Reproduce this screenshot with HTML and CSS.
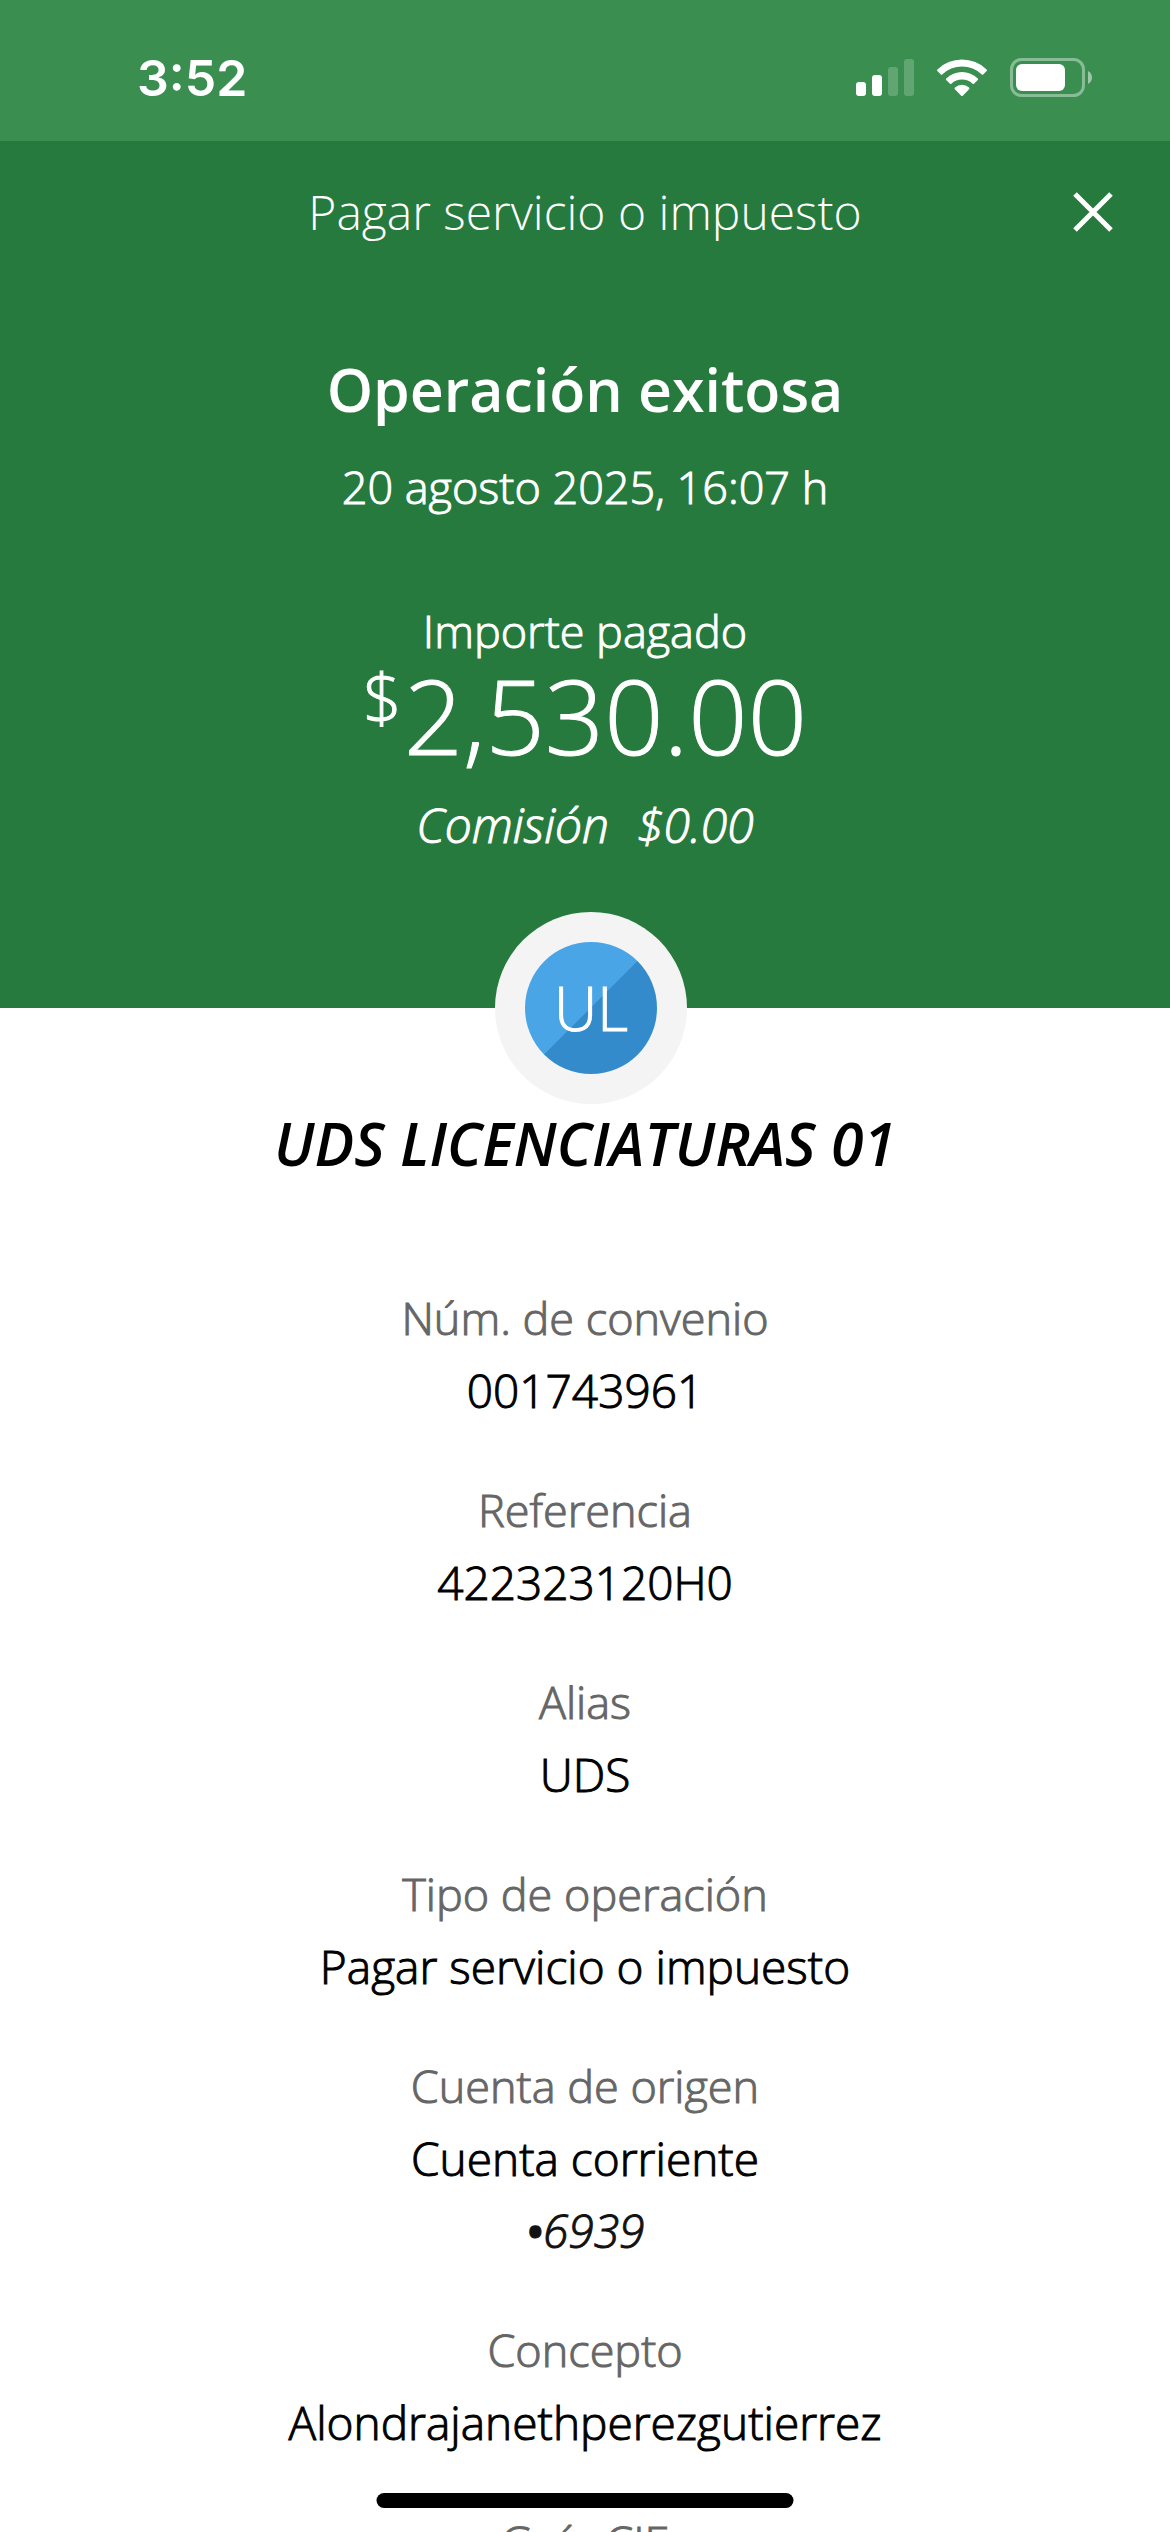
FILE: index.html
```html
<!DOCTYPE html>
<html lang="es">
<head>
<meta charset="utf-8">
<meta name="viewport" content="width=device-width, initial-scale=1">
<title>Pagar servicio o impuesto</title>
<link rel="stylesheet" href="styles.css">
</head>
<body>
<div class="screen">
  <div class="status">
    <time class="status-time">3:52</time>
    <div class="status-icons">
      <svg class="signal" viewBox="0 0 58 38" aria-hidden="true">
        <g fill="#fff">
          <rect x="0" y="23" width="10" height="14" rx="3"/>
          <rect x="16" y="16" width="10" height="21" rx="3"/>
          <rect x="32" y="8" width="10" height="29" rx="3" opacity=".2"/>
          <rect x="48" y="0" width="10" height="37" rx="3" opacity=".2"/>
        </g>
      </svg>
      <svg class="wifi" viewBox="0 0 52 38" aria-hidden="true">
        <g fill="#fff">
          <path d="M1.400 10.400A35.500 35.500 0 0 1 50.600 10.400Q51.400 11.200 50.600 12L47.200 15.400Q46.500 16 45.800 15.400A28.500 28.500 0 0 0 6.200 15.400Q5.500 16 4.800 15.400L1.400 12Q.6 11.200 1.400 10.400Z"/>
          <path d="M10.200 19.400A23 23 0 0 1 41.800 19.400Q42.600 20.200 41.800 21L38 24.800Q37.300 25.400 36.600 24.800A15.500 15.500 0 0 0 15.400 24.800Q14.700 25.400 14 24.800L10.200 21Q9.400 20.200 10.200 19.400Z"/>
          <path d="M19 28.500A10.500 10.500 0 0 1 33 28.500Q34 29.400 33.100 30.300L26.800 36.700Q26 37.400 25.200 36.700L18.900 30.300Q18 29.400 19 28.500Z"/>
        </g>
      </svg>
      <svg class="battery" viewBox="0 0 82 40" aria-hidden="true">
        <rect x="1.500" y="1.500" width="72" height="36" rx="10" fill="none" stroke="#fff" stroke-width="3" opacity=".4"/>
        <rect x="6" y="6" width="49" height="27" rx="6" fill="#fff"/>
        <path d="M78 13Q82 15.500 82 19.500T78 26Z" fill="#fff" opacity=".5"/>
      </svg>
    </div>
  </div>

  <div class="scroller">
    <header class="hero">
      <div class="topbar">
        <p class="topbar-title">Pagar servicio o impuesto</p>
        <button class="close" type="button" aria-label="Cerrar">
          <svg viewBox="0 0 40 40" aria-hidden="true"><path d="M2 2L38 38M38 2L2 38" stroke="#fff" stroke-width="5"/></svg>
        </button>
      </div>
      <h1 class="result">Operación exitosa</h1>
      <p class="date">20 agosto 2025, 16:07 h</p>
      <p class="amount-label">Importe pagado</p>
      <p class="amount"><span class="currency">$</span><span>2,530.00</span></p>
      <p class="fee"><span>Comisión</span><span>$0.00</span></p>
    </header>

    <main class="receipt">
      <div class="avatar-holder">
        <div class="avatar"><span class="avatar-disc">UL</span></div>
      </div>
      <h2 class="payee">UDS LICENCIATURAS 01</h2>
      <dl class="details">
        <div class="detail"><dt>Núm. de convenio</dt><dd>001743961</dd></div>
        <div class="detail"><dt>Referencia</dt><dd>422323120H0</dd></div>
        <div class="detail"><dt>Alias</dt><dd>UDS</dd></div>
        <div class="detail"><dt>Tipo de operación</dt><dd>Pagar servicio o impuesto</dd></div>
        <div class="detail"><dt>Cuenta de origen</dt><dd>Cuenta corriente</dd><dd class="account"><span class="mask">•</span>6939</dd></div>
        <div class="detail"><dt>Concepto</dt><dd>Alondrajanethperezgutierrez</dd></div>
        <div class="detail"><dt>Guía CIE</dt></div>
      </dl>
    </main>
  </div>
  <div class="home-indicator"></div>
</div>
</body>
</html>
```
FILE: styles.css
```css
:root {
  --green: #277a3e;
  --green-light: #3a8f50;
  --muted: #666;
}

* {
  box-sizing: border-box;
}

body,
h1,
h2,
p,
dl,
dd {
  margin: 0;
}

body {
  background: #fff;
  color: #000;
  font: 300 45px/72px "Open Sans", "Noto Sans", sans-serif;
  text-align: center;
  -webkit-text-stroke: 1px currentColor;
}

.screen {
  position: relative;
  display: flex;
  flex-direction: column;
  height: 100vh;
  overflow: hidden;
}

.status {
  display: flex;
  flex: none;
  align-items: center;
  justify-content: space-between;
  height: 141px;
  padding: 14px 78px 0 137px;
  background: var(--green-light);
  color: #fff;
}

.status-time {
  font: 600 50px/60px Inter, "Liberation Sans", sans-serif;
}

.status-time,
.topbar-title,
.result,
.payee {
  -webkit-text-stroke-width: 0;
}

.status-icons {
  display: flex;
  align-items: center;
  gap: 22px;
}

.signal {
  width: 58px;
  height: 38px;
}

.wifi {
  width: 52px;
  height: 38px;
}

.battery {
  width: 82px;
  height: 40px;
}

.scroller {
  flex: 1;
  min-height: 0;
  overflow-y: auto;
  scrollbar-width: none;
}

.hero {
  padding: 31px 53px 147px;
  background: var(--green);
  color: #fff;
}

.topbar {
  display: grid;
  grid-template-columns: 48px 1fr 48px;
  align-items: center;
  height: 80px;
  margin-bottom: 101px;
}

.topbar-title {
  grid-column: 2;
  font-size: 48px;
}

.close {
  display: grid;
  place-items: center;
  height: 48px;
  padding: 0;
  border: 0;
  background: none;
}

.close svg {
  width: 40px;
  height: 40px;
}

.result {
  margin-bottom: 26px;
  font-size: 59px;
  font-weight: 600;
  line-height: 72px;
}

.date {
  margin-bottom: 72px;
}

.amount {
  display: flex;
  justify-content: center;
  gap: 2px;
  margin-bottom: 26px;
  font-size: 104px;
  line-height: 96px;
}

.currency {
  font-size: 68px;
  line-height: 60px;
}

.fee {
  display: flex;
  justify-content: center;
  gap: 28px;
  font-size: 48px;
  font-style: italic;
}

.avatar-holder {
  display: flex;
  justify-content: center;
  margin-top: -96px;
  padding-left: 12px;
}

.avatar {
  padding: 30px;
  border-radius: 50%;
  background: #f4f4f4;
}

.avatar-disc {
  display: grid;
  place-items: center;
  width: 132px;
  height: 132px;
  border-radius: 50%;
  background: linear-gradient(135deg, #49a5e6 50%, #338bcb 50%);
  color: #fff;
  font-size: 60px;
}

.payee {
  margin: 3px 0 103px;
  font-size: 59px;
  font-style: italic;
  font-weight: 600;
  line-height: 72px;
}

.details {
  display: grid;
  gap: 48px;
}

.detail dt {
  color: var(--muted);
}

.detail dd {
  font-size: 46px;
}

.account {
  color: #121212;
  font-style: italic;
}

.mask {
  font-weight: 600;
}

.home-indicator {
  position: absolute;
  bottom: 24px;
  left: 50%;
  width: 417px;
  height: 15px;
  border-radius: 8px;
  background: #000;
  transform: translateX(-50%);
}
```
